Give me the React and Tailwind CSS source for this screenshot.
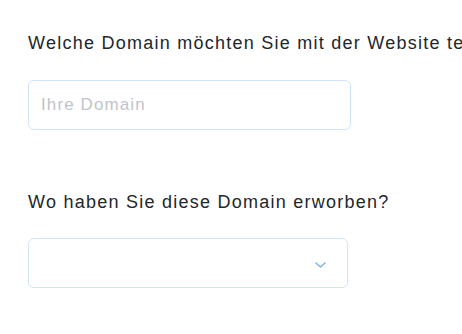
export default function App() {
  return (
    <div className="min-h-screen w-[462px] overflow-hidden bg-white pl-[28px] pt-[33px] font-['Liberation_Sans',Arial,sans-serif] text-[18px] tracking-[1.25px] text-[#22272c]">
      <label className="block whitespace-nowrap leading-[20px]">
        Welche Domain möchten Sie mit der Website testen?
      </label>
      <input
        type="text"
        placeholder="Ihre Domain"
        className="mt-[27px] block h-[50px] w-[323px] rounded-[6px] border border-[#cfe5fb] px-[12px] text-[17px] tracking-[1.1px] placeholder:text-[#c0c4ca] outline-none"
      />
      <label className="mt-[62px] block whitespace-nowrap leading-[20px]">
        Wo haben Sie diese Domain erworben?
      </label>
      <div className="mt-[26px] flex h-[50px] w-[320px] items-center justify-end rounded-[6px] border border-[#cfe5fb] pr-[21px]">
        <svg className="mt-[3px]" width="11" height="6" viewBox="0 0 11 6" fill="none">
          <path d="M1 1l4.5 4 4.5-4" stroke="#7fb2ea" strokeWidth="1.5" strokeLinecap="round" strokeLinejoin="round" />
        </svg>
      </div>
    </div>
  );
}
